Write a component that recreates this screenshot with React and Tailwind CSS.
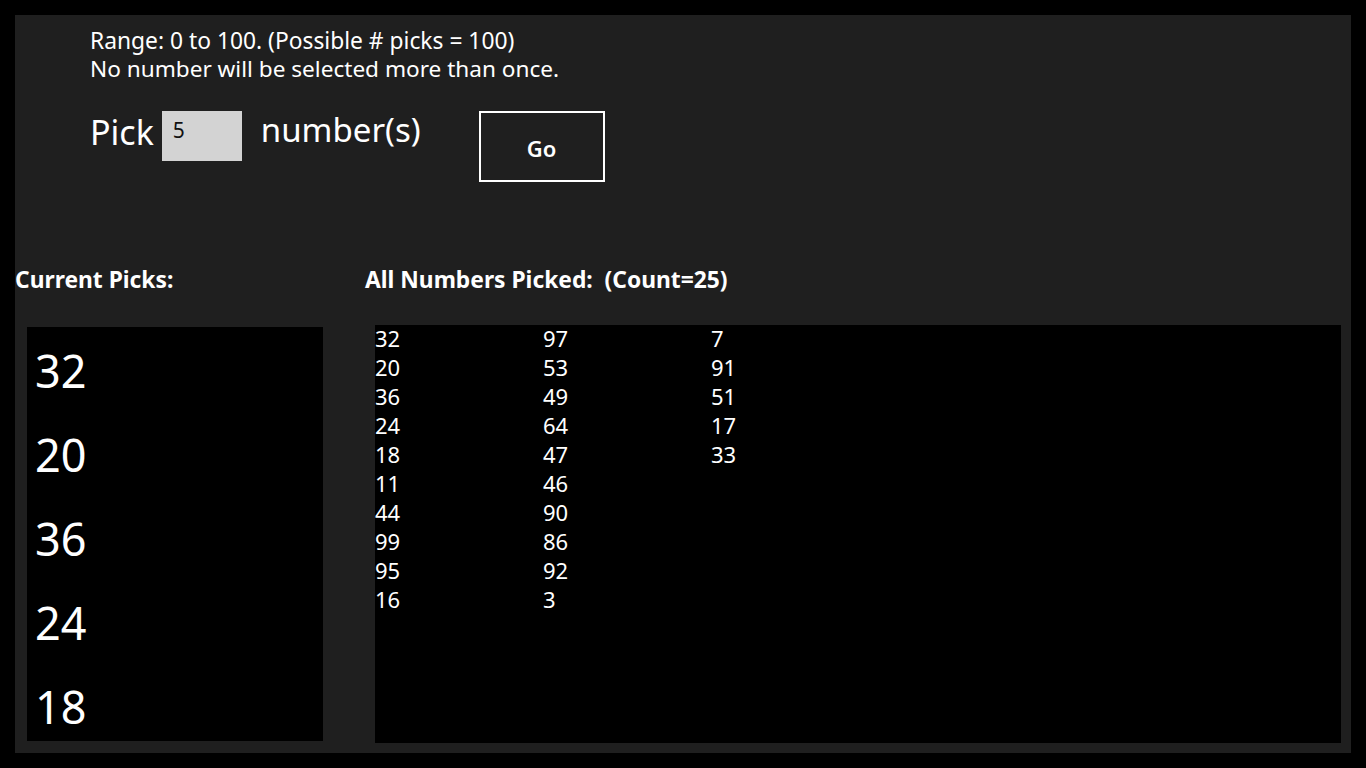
import React from "react";

const currentPicks = [32, 20, 36, 24, 18];
const allPicked = [
  32, 20, 36, 24, 18, 11, 44, 99, 95, 16,
  97, 53, 49, 64, 47, 46, 90, 86, 92, 3,
  7, 91, 51, 17, 33,
];

const font = { fontFamily: '"Noto Sans", "Open Sans", sans-serif' };

export default function App() {
  return (
    <div className="w-[1366px] h-[768px] bg-black p-[15px]" style={font}>
      <div className="w-[1336px] h-[738px] bg-[#1f1f1f] flex flex-col text-white">
        {/* header */}
        <div className="pl-[75px] pt-[12px]">
          <div className="text-[22.8px] leading-[28px]">Range: 0 to 100. (Possible # picks = 100)</div>
          <div className="text-[22.6px] leading-[28px]">No number will be selected more than once.</div>
        </div>

        <div className="flex items-start pl-[75px] mt-[28px]">
          <div className="text-[34px] leading-[40px] mt-[1px]">Pick</div>
          <div className="ml-[8px] w-[80px] h-[50px] bg-[#d3d3d3] text-[#111] text-[21px] leading-[28px] pl-[11px] pt-[5px]">
            5
          </div>
          <div className="ml-[19px] text-[33px] leading-[40px] -mt-px">number(s)</div>
          <button className="ml-[58px] w-[126px] h-[71px] border-2 border-white text-[22px] font-semibold pt-[3px]">
            Go
          </button>
        </div>

        {/* lists */}
        <div className="flex mt-[84px] flex-1 min-h-0">
          <div className="w-[350px] flex flex-col">
            <div className="text-[22.8px] font-bold leading-[28px]">Current Picks:</div>
            <div className="ml-[12px] mt-[33px] w-[296px] h-[414px] bg-black pl-[8px] pt-[2px]">
              {currentPicks.map((n) => (
                <div key={n} className="text-[45px] leading-[84px]">
                  {n}
                </div>
              ))}
            </div>
          </div>
          <div className="flex-1 flex flex-col">
            <div className="text-[22.8px] font-bold leading-[28px]">
              All Numbers Picked:&nbsp;&nbsp;(Count=25)
            </div>
            <div className="ml-[10px] mt-[31px] w-[966px] h-[418px] bg-black">
              <div className="grid grid-flow-col grid-rows-10 auto-cols-[168px] w-max -mt-px">
                {allPicked.map((n, i) => (
                  <div key={i} className="text-[22px] leading-[29px]">
                    {n}
                  </div>
                ))}
              </div>
            </div>
          </div>
        </div>
      </div>
    </div>
  );
}
